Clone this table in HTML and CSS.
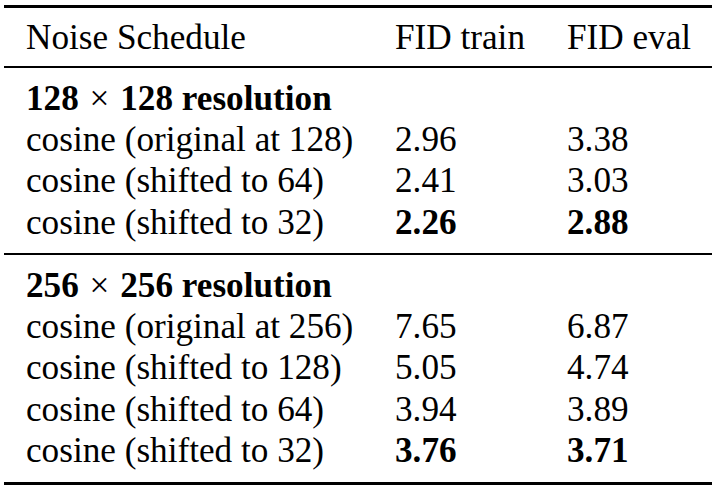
FILE: index.html
```html
<!DOCTYPE html>
<html>
<head>
<meta charset="utf-8">
<link rel="stylesheet" href="styles.css">
</head>
<body>
<div class="wrap">
  <div class="tbl">
    <div class="row head">
      <span>Noise Schedule</span><span>FID train</span><span>FID eval</span>
    </div>
    <div class="section first">
      <div class="row"><span class="b">128 <span class="times">×</span> 128 resolution</span><span></span><span></span></div>
      <div class="row"><span>cosine (original at 128)</span><span>2.96</span><span>3.38</span></div>
      <div class="row"><span>cosine (shifted to 64)</span><span>2.41</span><span>3.03</span></div>
      <div class="row"><span>cosine (shifted to 32)</span><span class="b">2.26</span><span class="b">2.88</span></div>
    </div>
    <div class="section second">
      <div class="row"><span class="b">256 <span class="times">×</span> 256 resolution</span><span></span><span></span></div>
      <div class="row"><span>cosine (original at 256)</span><span>7.65</span><span>6.87</span></div>
      <div class="row"><span>cosine (shifted to 128)</span><span>5.05</span><span>4.74</span></div>
      <div class="row"><span>cosine (shifted to 64)</span><span>3.94</span><span>3.89</span></div>
      <div class="row"><span>cosine (shifted to 32)</span><span class="b">3.76</span><span class="b">3.71</span></div>
    </div>
  </div>
</div>
</body>
</html>
```
FILE: styles.css
```css
html, body {
  margin: 0;
  padding: 0;
  background: #fff;
}
body {
  font-family: "Liberation Serif", "Times New Roman", serif;
  font-size: 35.2px;
  color: #000;
}
.wrap {
  padding-top: 5px;
}
.tbl {
  margin-left: 4px;
  width: 708px;
  border-top: 3px solid #000;
  border-bottom: 3px solid #000;
}
.row {
  display: grid;
  grid-template-columns: 369px 172px 1fr;
  padding-left: 22px;
  line-height: 41.3px;
  height: 41.3px;
  white-space: nowrap;
}
.head {
  padding-top: 8.6px;
  padding-bottom: 8.1px;
  border-bottom: 2px solid #000;
}
.section.first {
  padding-top: 9.7px;
  padding-bottom: 10.1px;
}
.section.second {
  border-top: 2px solid #000;
  padding-top: 9.9px;
  padding-bottom: 10.6px;
}
.b {
  font-weight: bold;
}
.times {
  font-weight: normal;
  padding: 0 2px;
}
```
